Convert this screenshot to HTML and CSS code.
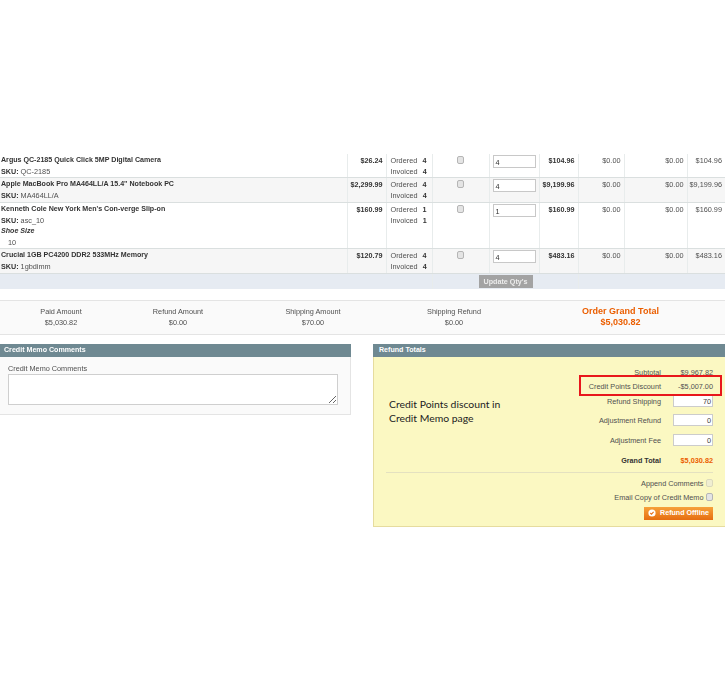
FILE: index.html
```html
<!DOCTYPE html>
<html lang="en">
<head>
    <meta charset="UTF-8">
    <meta name="viewport" content="width=device-width, initial-scale=1.0">
    <title>New Credit Memo</title>
    <link rel="stylesheet" href="styles.css">
</head>
<body>
    <div class="page">
        <table class="items">
            <colgroup>
                <col class="col-name"><col class="col-price"><col class="col-qty"><col class="col-return">
                <col class="col-input"><col class="col-sub"><col class="col-tax"><col class="col-disc"><col class="col-total">
            </colgroup>
            <tbody>
                <tr class="r-first">
                    <td><div class="name">Argus QC-2185 Quick Click 5MP Digital Camera</div><div><b>SKU:</b> QC-2185</div></td>
                    <td class="num"><b>$26.24</b></td>
                    <td><div class="qty"><span>Ordered</span><b>4</b></div><div class="qty"><span>Invoiced</span><b>4</b></div></td>
                    <td class="center"><span class="check"></span></td>
                    <td><span class="qty-input">4</span></td>
                    <td class="num"><b>$104.96</b></td>
                    <td class="num">$0.00</td>
                    <td class="num">$0.00</td>
                    <td class="num">$104.96</td>
                </tr>
                <tr class="r-short even">
                    <td><div class="name">Apple MacBook Pro MA464LL/A 15.4" Notebook PC</div><div><b>SKU:</b> MA464LL/A</div></td>
                    <td class="num"><b>$2,299.99</b></td>
                    <td><div class="qty"><span>Ordered</span><b>4</b></div><div class="qty"><span>Invoiced</span><b>4</b></div></td>
                    <td class="center"><span class="check"></span></td>
                    <td><span class="qty-input">4</span></td>
                    <td class="num"><b>$9,199.96</b></td>
                    <td class="num">$0.00</td>
                    <td class="num">$0.00</td>
                    <td class="num">$9,199.96</td>
                </tr>
                <tr class="r-tall">
                    <td>
                        <div class="name">Kenneth Cole New York Men's Con-verge Slip-on</div>
                        <div><b>SKU:</b> asc_10</div>
                        <div class="opt-label">Shoe Size</div>
                        <div class="opt-value">10</div>
                    </td>
                    <td class="num"><b>$160.99</b></td>
                    <td><div class="qty"><span>Ordered</span><b>1</b></div><div class="qty"><span>Invoiced</span><b>1</b></div></td>
                    <td class="center"><span class="check"></span></td>
                    <td><span class="qty-input">1</span></td>
                    <td class="num"><b>$160.99</b></td>
                    <td class="num">$0.00</td>
                    <td class="num">$0.00</td>
                    <td class="num">$160.99</td>
                </tr>
                <tr class="r-short even">
                    <td><div class="name">Crucial 1GB PC4200 DDR2 533MHz Memory</div><div><b>SKU:</b> 1gbdimm</div></td>
                    <td class="num"><b>$120.79</b></td>
                    <td><div class="qty"><span>Ordered</span><b>4</b></div><div class="qty"><span>Invoiced</span><b>4</b></div></td>
                    <td class="center"><span class="check"></span></td>
                    <td><span class="qty-input">4</span></td>
                    <td class="num"><b>$483.16</b></td>
                    <td class="num">$0.00</td>
                    <td class="num">$0.00</td>
                    <td class="num">$483.16</td>
                </tr>
            </tbody>
            <tfoot>
                <tr>
                    <td colspan="3"></td>
                    <td colspan="3" class="update-cell"><button class="update-btn">Update Qty's</button></td>
                    <td colspan="3"></td>
                </tr>
            </tfoot>
        </table>

        <div class="summary">
            <div><div>Paid Amount</div><div>$5,030.82</div></div>
            <div><div>Refund Amount</div><div>$0.00</div></div>
            <div><div>Shipping Amount</div><div>$70.00</div></div>
            <div><div>Shipping Refund</div><div>$0.00</div></div>
            <div class="grand"><div>Order Grand Total</div><div>$5,030.82</div></div>
        </div>

        <div class="panels">
            <section class="panel panel-comments">
                <h4>Credit Memo Comments</h4>
                <div class="comments-body">
                    <label for="comment">Credit Memo Comments</label>
                    <textarea id="comment"></textarea>
                </div>
            </section>

            <section class="panel panel-totals">
                <h4>Refund Totals</h4>
                <div class="totals-body">
                    <div class="line"><span>Subtotal</span><span class="val">$9,967.82</span></div>
                    <div class="line"><span>Credit Points Discount</span><span class="val">-$5,007.00</span></div>
                    <div class="line line-ship"><span>Refund Shipping</span><span class="val"><span class="amount">70</span></span></div>
                    <div class="line line-input"><span>Adjustment Refund</span><span class="val"><span class="amount">0</span></span></div>
                    <div class="line line-input"><span>Adjustment Fee</span><span class="val"><span class="amount">0</span></span></div>
                    <div class="line line-grand"><b>Grand Total</b><span class="val total">$5,030.82</span></div>
                    <hr>
                    <div class="opt opt-first"><span>Append Comments</span><span class="check faded"></span></div>
                    <div class="opt"><span>Email Copy of Credit Memo</span><span class="check"></span></div>
                    <div class="opt-btn">
                        <button class="refund-btn">
                            <svg width="8" height="8" viewBox="0 0 8 8"><circle cx="4" cy="4" r="3.6" fill="#fff"/><path d="M2.3 4l1.2 1.2 2.1-2.3" fill="none" stroke="#e8721c" stroke-width="1.1"/></svg>
                            Refund Offline
                        </button>
                    </div>
                </div>
                <p class="note">Credit Points discount in<br>Credit Memo page</p>
                <div class="highlight"></div>
            </section>
        </div>
    </div>
</body>
</html>
```

FILE: styles.css
```css
html, body {
    margin: 0;
    background-color: #fff;
}
.page {
    width: 725px;
    height: 680px;
    padding-top: 154px;
    box-sizing: border-box;
    overflow: hidden;
    font-family: "Liberation Sans", Arial, sans-serif;
    font-size: 7.3px;
    line-height: 11px;
    color: #505050;
    filter: blur(0.25px);
}
b {
    color: #333;
    font-size: 7.2px;
}

/* items table */
.items {
    width: 725px;
    table-layout: fixed;
    border-collapse: collapse;
}
.col-name { width: 347px; }
.col-price { width: 39px; }
.col-qty { width: 46px; }
.col-return { width: 57px; }
.col-input { width: 50px; }
.col-sub { width: 39px; }
.col-tax { width: 46px; }
.col-disc { width: 63px; }
.col-total { width: 38px; }
.items td {
    padding: 1px 1px 0;
    vertical-align: top;
    border-left: 1px solid #e8ecec;
    border-bottom: 1px solid #dadfdf;
    white-space: nowrap;
}
.items td:first-child {
    border-left: 0;
}
.r-first td { height: 21px; }
.r-short td { height: 23px; }
.r-tall td { height: 44px; }
.even td { background-color: #f6f6f6; }
.name {
    font-weight: bold;
    font-size: 7.1px;
    color: #333;
}
.opt-label {
    font-weight: bold;
    font-style: italic;
    color: #333;
    font-size: 7.1px;
}
.opt-value {
    padding-left: 7px;
}
.items .num {
    padding-right: 3px;
    text-align: right;
}
.center {
    text-align: center;
}
.qty {
    display: flex;
    gap: 5px;
    padding-left: 3px;
}
.qty span {
    min-width: 27px;
}
.check {
    display: inline-block;
    width: 5.5px;
    height: 5.5px;
    border: 1px solid #b5b5b5;
    border-radius: 2px;
    background-color: #e4e4e4;
    vertical-align: top;
    margin-top: 1px;
}
.check.faded {
    opacity: 0.45;
}
.qty-input {
    display: block;
    width: 39px;
    height: 10px;
    margin: 0 0 0 2px;
    padding: 1px 0 0 2px;
    background-color: #fff;
    border: 1px solid #c8c8c8;
    color: #333;
}
.items tfoot td {
    height: 15px;
    padding: 0;
    background-color: #e6ebf2;
    border-top: 1px solid #bcc7d0;
    border-bottom: 0;
    text-align: center;
}
.update-btn {
    display: block;
    width: 54px;
    height: 13px;
    margin: 1px 0 0 46px;
    padding: 0;
    border: 0;
    background-color: #a3a3a3;
    color: #ececec;
    font: bold 7.2px "Liberation Sans", Arial, sans-serif;
}

/* amounts strip */
.summary {
    display: grid;
    grid-template-columns: 122px 112px 158px 124px 209px;
    height: 28px;
    margin-top: 11px;
    padding-top: 5px;
    background-color: #fafafa;
    border-top: 1px solid #e4e4e4;
    border-bottom: 1px solid #e4e4e4;
    text-align: center;
}
.grand {
    color: #eb5e00;
    font-weight: bold;
    font-size: 9px;
}

/* panels */
.panels {
    display: flex;
    justify-content: space-between;
    align-items: flex-start;
    margin-top: 9px;
}
.panel h4 {
    margin: 0;
    height: 13px;
    padding-left: 4px;
    background-color: #6f8992;
    color: #fff;
    font-size: 7.1px;
    line-height: 13px;
}
.panel-comments {
    width: 351px;
}
.comments-body {
    height: 58px;
    box-sizing: border-box;
    padding: 6px 12px 0 8px;
    background-color: #fafafa;
    border: 1px solid #e4e4e4;
    border-width: 0 1px 1px 0;
}
.comments-body label {
    display: block;
}
.comments-body textarea {
    display: block;
    width: 330px;
    height: 31px;
    box-sizing: border-box;
    margin: 0;
    border: 1px solid #cfcfcf;
    background-color: #fff;
}
.panel-totals {
    position: relative;
    width: 352px;
}
.panel-totals h4 {
    padding-left: 6px;
}
.totals-body {
    height: 170px;
    box-sizing: border-box;
    padding: 8px 12px 0 12px;
    background-color: #fbf8c2;
    border: 1px solid #e6dc9e;
    border-width: 0 0 1px 1px;
}
.line, .opt, .opt-btn {
    display: flex;
    justify-content: flex-end;
    align-items: center;
}
.line {
    height: 14.5px;
}
.val {
    width: 52px;
    text-align: right;
}
.amount {
    display: block;
    width: 37px;
    height: 10px;
    margin-left: 12px;
    padding-right: 1px;
    background-color: #fff;
    border: 1px solid #ccc;
    color: #444;
}
.line-ship {
    margin-bottom: 1.5px;
}
.line-input, .line-grand {
    height: 20px;
}
.total {
    color: #eb5e00;
    font-weight: bold;
}
.totals-body hr {
    margin: 2px 0 0;
    border: 0;
    border-top: 1px solid #e4e1c0;
}
.opt {
    height: 14px;
    gap: 2px;
}
.opt-first {
    margin-top: 3px;
}
.opt .check {
    margin-top: 0;
}
.opt-btn {
    margin-top: 3px;
}
.refund-btn {
    display: flex;
    align-items: center;
    justify-content: center;
    gap: 4px;
    width: 69px;
    height: 12.5px;
    padding: 0;
    border: 0;
    background: linear-gradient(#f6a13a, #e66d10);
    color: #fff;
    font: bold 7.1px "Liberation Sans", Arial, sans-serif;
    white-space: nowrap;
}
.note {
    position: absolute;
    left: 16px;
    top: 53px;
    margin: 0;
    font-family: Lato, sans-serif;
    font-size: 10.4px;
    line-height: 14px;
    color: #222;
}
.highlight {
    position: absolute;
    left: 206px;
    top: 31px;
    width: 139px;
    height: 17px;
    border: 2px solid #e8171c;
}
```
